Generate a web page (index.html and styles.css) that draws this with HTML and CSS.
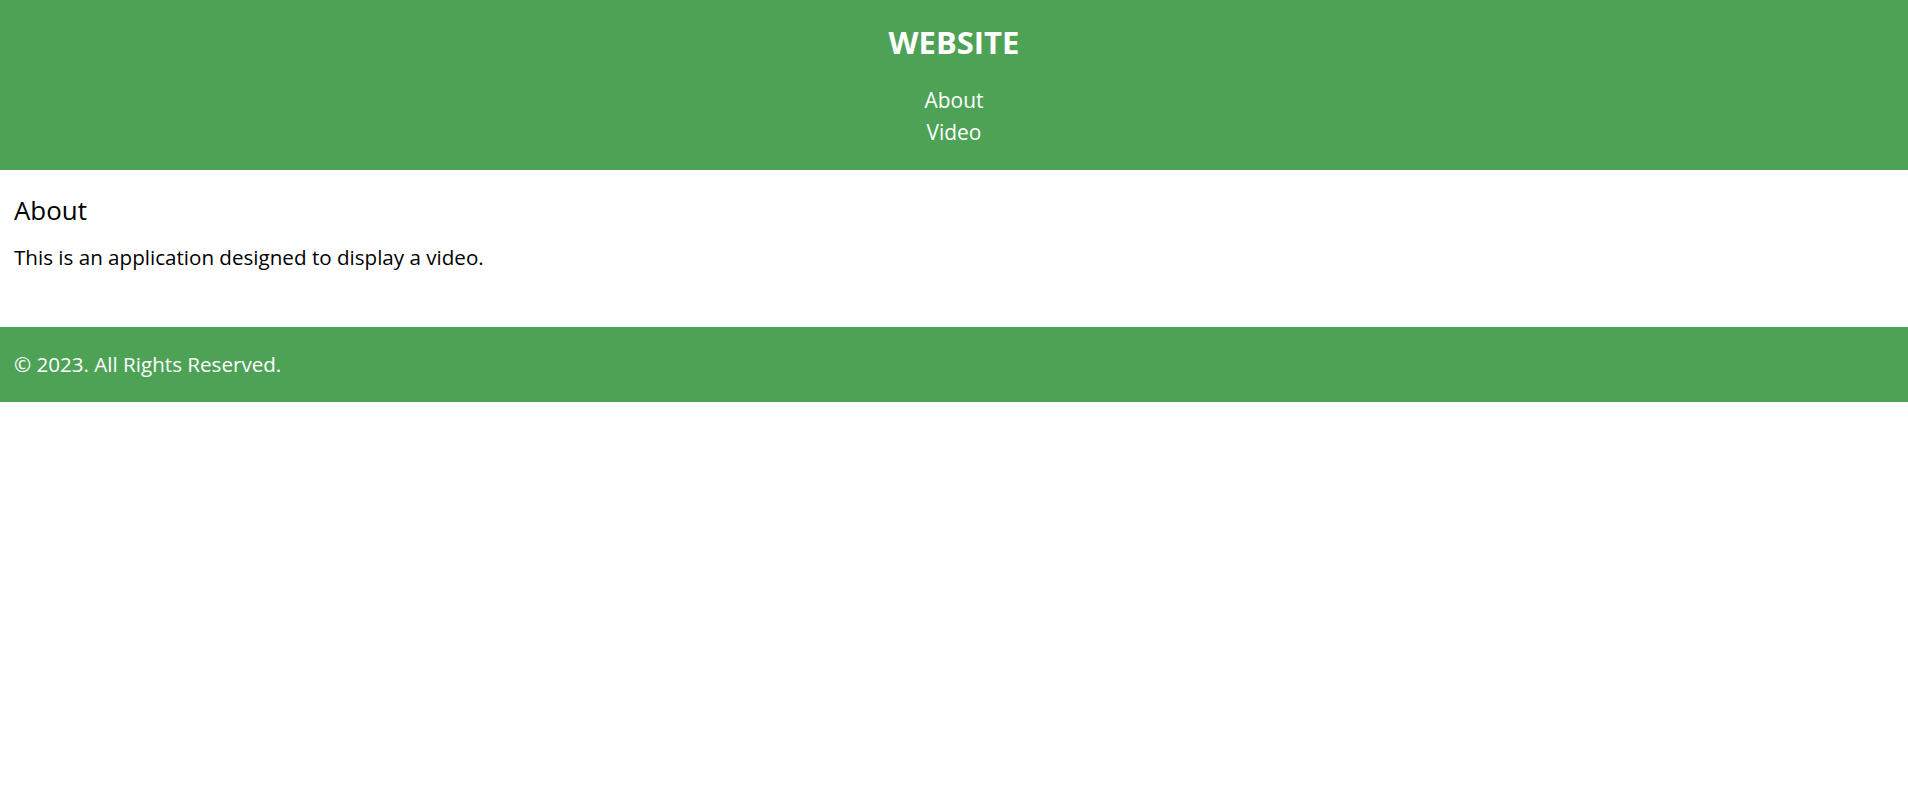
FILE: index.html
```html
<!DOCTYPE html>
<html lang="en">
<head>
<meta charset="utf-8">
<title>Website</title>
<link rel="stylesheet" href="styles.css">
</head>
<body>
<header class="site-header">
  <h1 class="site-title">WEBSITE</h1>
  <nav class="site-nav">
    <a href="#about">About</a>
    <a href="#video">Video</a>
  </nav>
</header>
<main class="content">
  <section id="about" class="about">
    <h2 class="about-title">About</h2>
    <p class="about-text">This is an application designed to display a video.</p>
  </section>
</main>
<footer class="site-footer">
  <p>© 2023. All Rights Reserved.</p>
</footer>
</body>
</html>
```
FILE: styles.css
```css
html, body {
  margin: 0;
  padding: 0;
  background: #fff;
}
body {
  font-family: "Open Sans", "Noto Sans", sans-serif;
  color: #000;
}
.site-header {
  background: #4ea256;
  color: #fff;
  text-align: center;
  padding: 22px 0 22px;
}
.site-title {
  margin: 0;
  font-size: 31px;
  font-weight: 700;
  line-height: 40px;
}
.site-nav {
  margin-top: 22px;
  display: flex;
  flex-direction: column;
  align-items: center;
}
.site-nav a {
  color: #fff;
  text-decoration: none;
  font-size: 20.9px;
  line-height: 32px;
}
.content {
  padding: 23px 14px 56px;
}
.about-title {
  margin: 0;
  font-size: 25.9px;
  font-weight: 400;
  line-height: 34px;
}
.about-text {
  margin: 16px 0 0;
  font-size: 20.6px;
  line-height: 28px;
}
.site-footer {
  background: #4ea256;
  color: #fff;
  padding: 0 14px;
}
.site-footer p {
  margin: 0;
  font-size: 20.6px;
  line-height: 75px;
}
```
